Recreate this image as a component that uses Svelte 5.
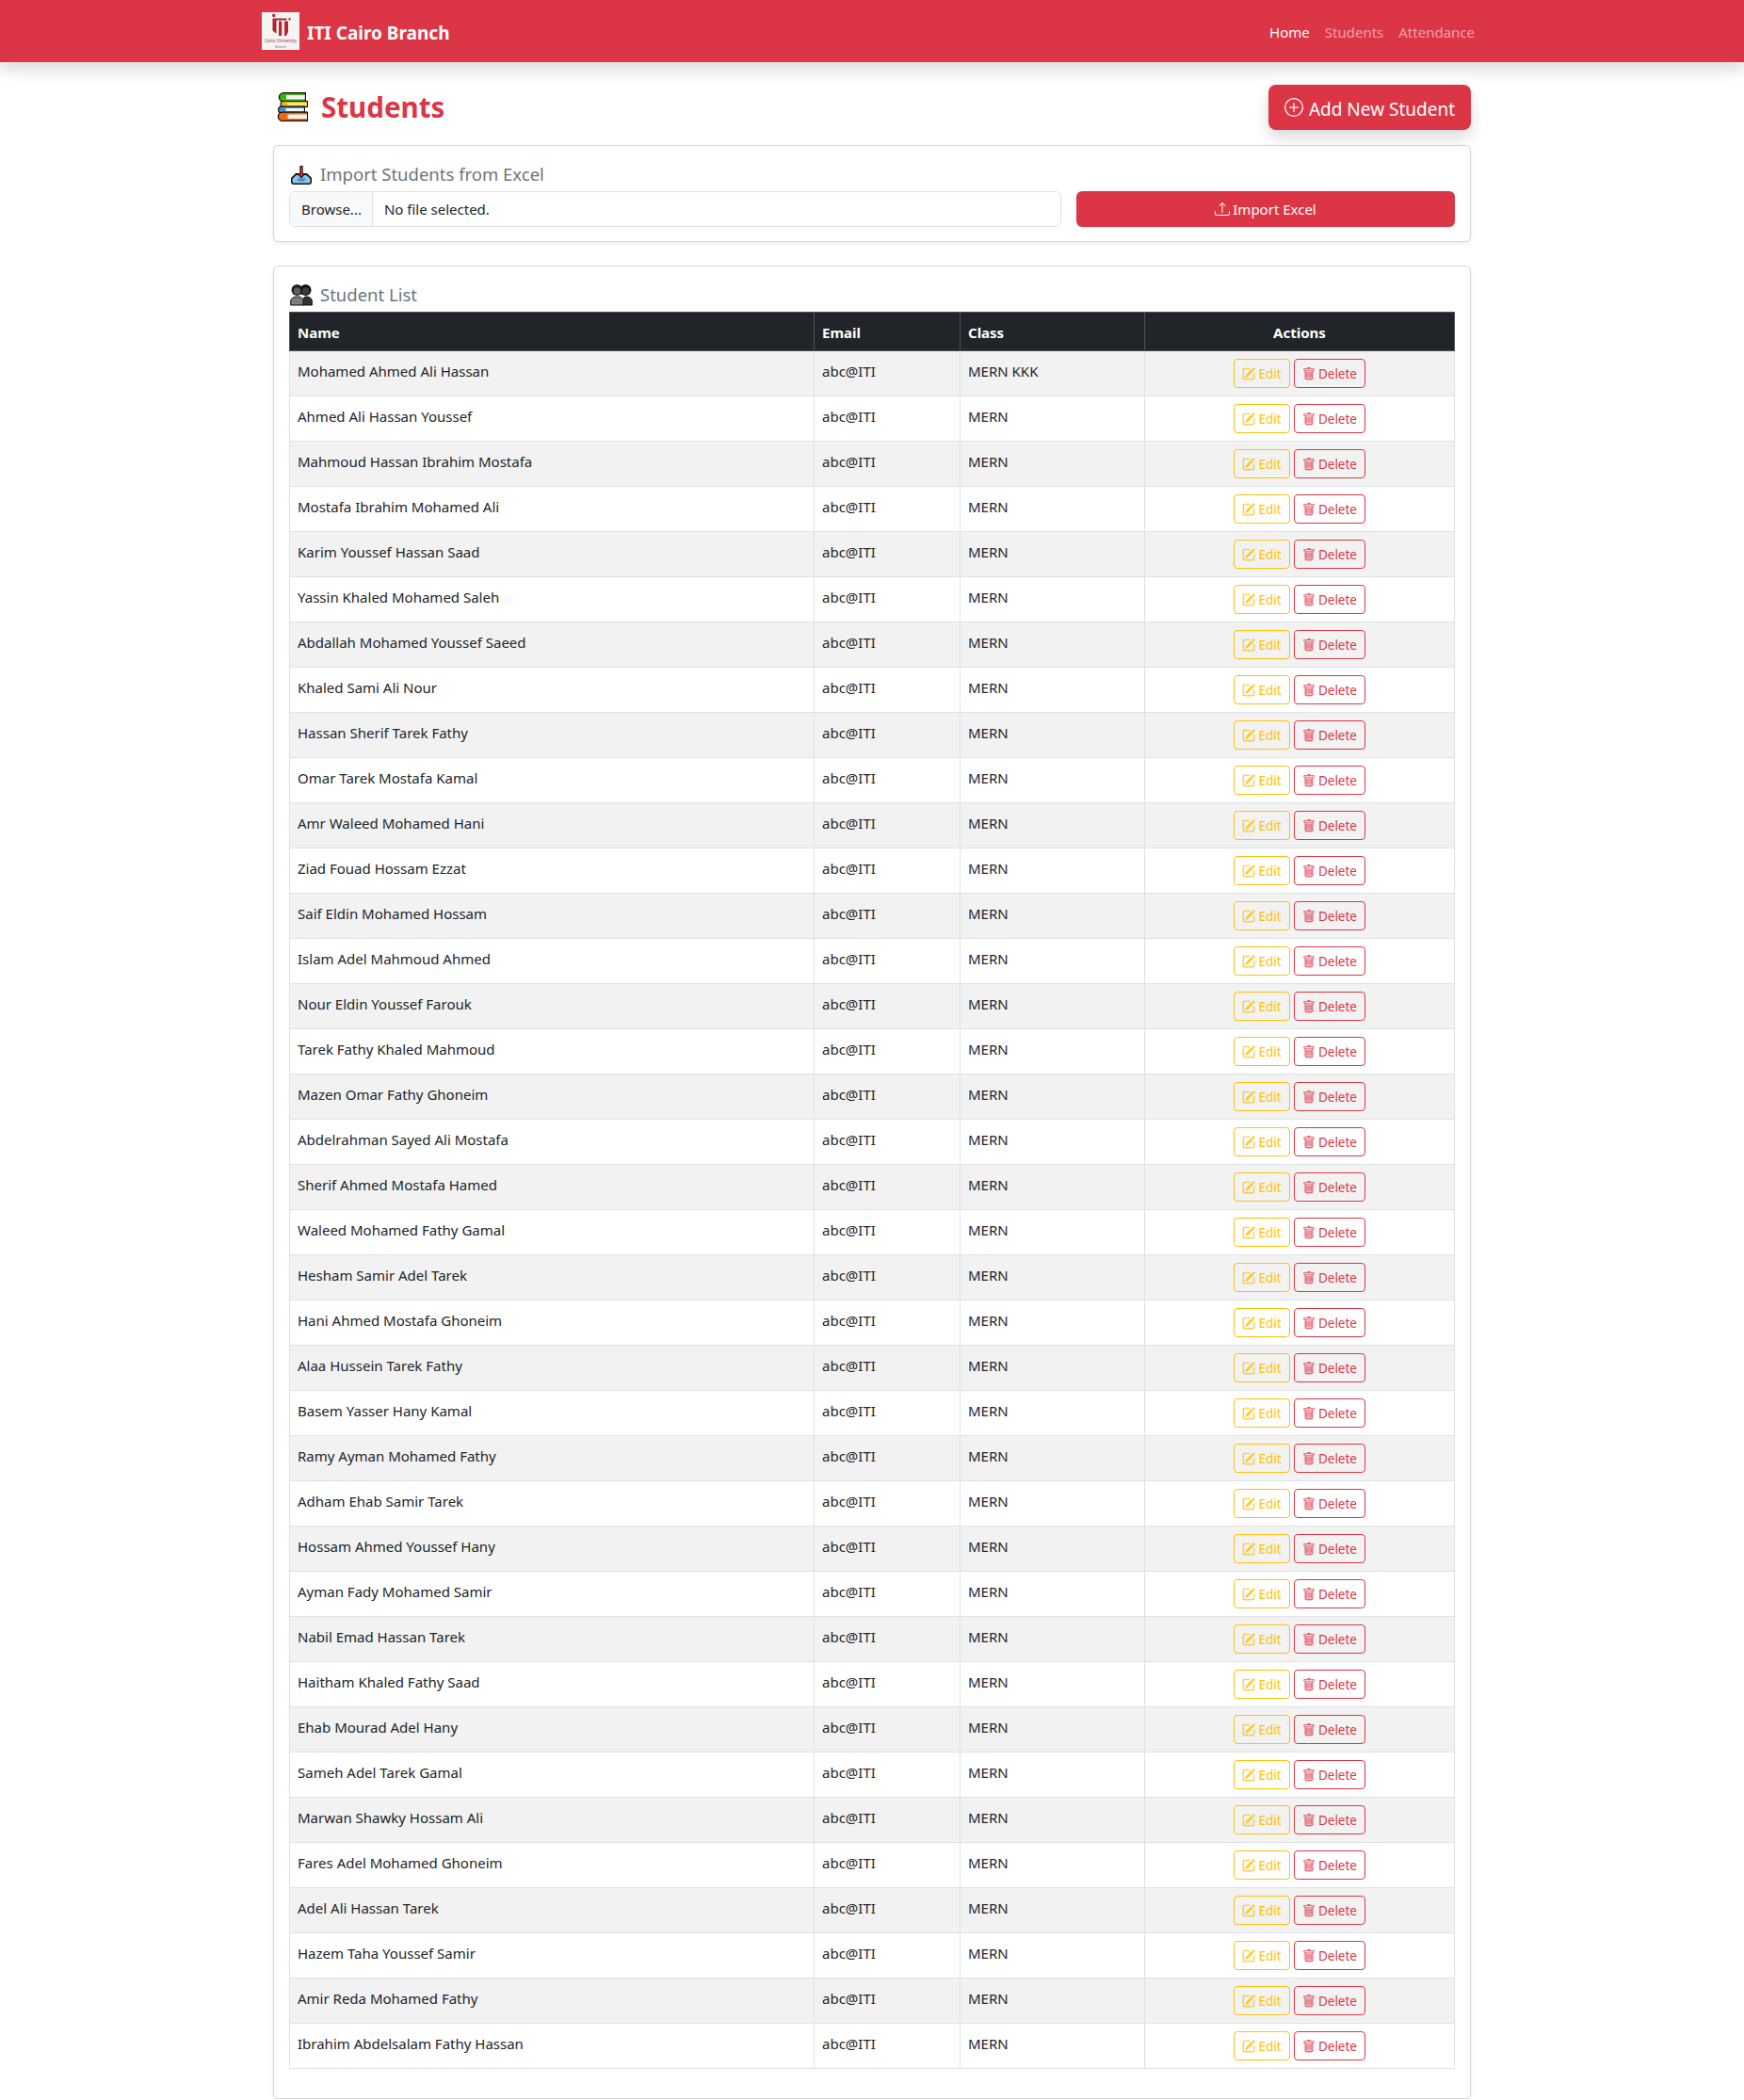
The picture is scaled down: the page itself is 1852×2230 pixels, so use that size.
<script>
  const names = [
    "Mohamed Ahmed Ali Hassan", "Ahmed Ali Hassan Youssef", "Mahmoud Hassan Ibrahim Mostafa",
    "Mostafa Ibrahim Mohamed Ali", "Karim Youssef Hassan Saad", "Yassin Khaled Mohamed Saleh",
    "Abdallah Mohamed Youssef Saeed", "Khaled Sami Ali Nour", "Hassan Sherif Tarek Fathy",
    "Omar Tarek Mostafa Kamal", "Amr Waleed Mohamed Hani", "Ziad Fouad Hossam Ezzat",
    "Saif Eldin Mohamed Hossam", "Islam Adel Mahmoud Ahmed", "Nour Eldin Youssef Farouk",
    "Tarek Fathy Khaled Mahmoud", "Mazen Omar Fathy Ghoneim", "Abdelrahman Sayed Ali Mostafa",
    "Sherif Ahmed Mostafa Hamed", "Waleed Mohamed Fathy Gamal", "Hesham Samir Adel Tarek",
    "Hani Ahmed Mostafa Ghoneim", "Alaa Hussein Tarek Fathy", "Basem Yasser Hany Kamal",
    "Ramy Ayman Mohamed Fathy", "Adham Ehab Samir Tarek", "Hossam Ahmed Youssef Hany",
    "Ayman Fady Mohamed Samir", "Nabil Emad Hassan Tarek", "Haitham Khaled Fathy Saad",
    "Ehab Mourad Adel Hany", "Sameh Adel Tarek Gamal", "Marwan Shawky Hossam Ali",
    "Fares Adel Mohamed Ghoneim", "Adel Ali Hassan Tarek", "Hazem Taha Youssef Samir",
    "Amir Reda Mohamed Fathy", "Ibrahim Abdelsalam Fathy Hassan"
  ];
  const students = names.map((name, i) => ({
    name,
    email: "abc@ITI",
    className: i === 0 ? "MERN KKK" : "MERN"
  }));
</script>

<nav class="navbar">
  <div class="nav-inner">
    <a class="brand" href="#home">
      <span class="logo">
        <svg viewBox="0 0 40 40" width="40" height="40">
          <rect width="40" height="40" fill="#f4f4f4" />
          <circle cx="12.700" cy="3.500" r="1.700" fill="#c3202c" />
          <path d="M11.500 6.500h15v2h-11V22h-1l-3-2.500z" fill="#a9232d" />
          <path d="M18 9.500h3.200V25H18zM24 9.500h4V21l-2 4h-2z" fill="#b5262f" />
          <path d="M28 6.800h3v.9h-3zM29 5.800h1v3h-1z" fill="#c3202c" />
          <text class="logo-line" x="20" y="32" font-size="4.600" fill="#b8323c">Cairo University</text>
          <text class="logo-line" x="20" y="37.500" font-size="3.400" fill="#7d6a6e">Branch</text>
        </svg>
      </span>
      <span class="brand-name">ITI Cairo Branch</span>
    </a>
    <div class="nav-links">
      <a class="active" href="#home">Home</a>
      <a href="#students">Students</a>
      <a href="#attendance">Attendance</a>
    </div>
  </div>
</nav>

<main class="page">
  <div class="page-head">
    <h2 class="page-title">
      <svg class="books" viewBox="0 0 33 31" width="33" height="31">
        <path d="M7 0h24v10.500H7a5 5 0 0 1 0-10.500z" fill="#111" />
        <path d="M7 1.200h22.800v8H7a4 4 0 0 1 0-8z" fill="#3fb30e" />
        <path d="M10 3h19.800v4.400H10z" fill="#f4f4f4" />
        <path d="M7 9h26v7H7a3.500 3.500 0 0 1 0-7z" fill="#111" />
        <path d="M7 10.100h25v4.800H7a2.400 2.400 0 0 1 0-4.800z" fill="#f5b514" />
        <path d="M11 11.500h20v2H11z" fill="#fdf3d0" />
        <path d="M5 14.500h25v8H5a4 4 0 0 1 0-8z" fill="#111" />
        <path d="M5 15.700h23.800v5.600H5a2.800 2.800 0 0 1 0-5.600z" fill="#3f8fd8" />
        <path d="M9.500 17h19.300v3H9.500z" fill="#f4f4f4" />
        <path d="M6 20.500h27V31H6a5.200 5.200 0 0 1 0-10.500z" fill="#111" />
        <path d="M6 21.800h26v8H6a4 4 0 0 1 0-8z" fill="#f0660f" />
        <path d="M12 23.500q-1.500 2.200 0 4.500h20v-4.500z" fill="#f6f6f6" />
      </svg>
      Students
    </h2>
    <button class="btn btn-add">
      <svg viewBox="0 0 16 16" width="20" height="20" fill="currentColor">
        <path d="M8 15A7 7 0 1 1 8 1a7 7 0 0 1 0 14zm0 1A8 8 0 1 0 8 0a8 8 0 0 0 0 16z" />
        <path d="M8 4a.5.5 0 0 1 .5.5v3h3a.5.5 0 0 1 0 1h-3v3a.5.5 0 0 1-1 0v-3h-3a.5.5 0 0 1 0-1h3v-3A.5.5 0 0 1 8 4z" />
      </svg>
      <span class="add-label">Add New Student</span>
    </button>
  </div>

  <section class="card import-card">
    <h5 class="card-title">
      <svg viewBox="0 0 24 24" width="24" height="24">
        <path d="M1 16l5-5h12l5 5v4a3 3 0 0 1-3 3H4a3 3 0 0 1-3-3z" fill="#111" />
        <path d="M2.500 17l4-4h11l4 4v3a1.500 1.500 0 0 1-1.500 1.500H4A1.500 1.500 0 0 1 2.500 20z" fill="#8cc6ee" />
        <path d="M7 16.500h10l-2 3H9z" fill="#3f8fd0" />
        <path d="M10.300 3h3.400v8h3.300l-5 5.500-5-5.500h3.300z" fill="#111" />
        <path d="M11.200 4h1.600v8h1.800L12 15 9.400 12h1.800z" fill="#e0262c" />
      </svg>
      Import Students from Excel
    </h5>
    <div class="import-row">
      <div class="file-input">
        <span class="file-btn">Browse...</span>
        <span class="file-name">No file selected.</span>
      </div>
      <button class="btn btn-import">
        <svg viewBox="0 0 16 16" width="16" height="16" fill="currentColor">
          <path d="M.5 9.900a.5.5 0 0 1 .5.500v2.500a1 1 0 0 0 1 1h12a1 1 0 0 0 1-1v-2.500a.5.5 0 0 1 1 0v2.500a2 2 0 0 1-2 2H2a2 2 0 0 1-2-2v-2.500a.5.5 0 0 1 .5-.5z" />
          <path d="M7.646 1.146a.5.5 0 0 1 .708 0l3 3a.5.5 0 0 1-.708.708L8.500 2.707V11.500a.5.5 0 0 1-1 0V2.707L5.354 4.854a.5.5 0 1 1-.708-.708l3-3z" />
        </svg>
        Import Excel
      </button>
    </div>
  </section>

  <section class="card list-card">
    <h5 class="card-title">
      <svg viewBox="0 0 24 24" width="24" height="24">
        <circle cx="7.500" cy="7" r="6" fill="#1c1c1c" />
        <circle cx="16.500" cy="7" r="6" fill="#111" />
        <circle cx="7.500" cy="8" r="3.800" fill="#5c5c5c" />
        <circle cx="16.500" cy="8" r="3.800" fill="#3c3c3c" />
        <path d="M.7 23v-4c0-3 3-5 7-5s7 2 7 5v4z" fill="#7c7c7c" stroke="#111" />
        <path d="M14 23v-4c0-3 .5-5 3-5 4 0 6.300 2 6.300 5v4z" fill="#333" stroke="#111" />
      </svg>
      Student List
    </h5>
    <table class="table">
      <colgroup>
        <col class="col-name" />
        <col class="col-email" />
        <col class="col-class" />
        <col />
      </colgroup>
      <thead>
        <tr>
          <th>Name</th>
          <th>Email</th>
          <th>Class</th>
          <th class="center">Actions</th>
        </tr>
      </thead>
      <tbody>
        {#each students as s}
          <tr>
            <td>{s.name}</td>
            <td>{s.email}</td>
            <td>{s.className}</td>
            <td class="center">
              <button class="btn-sm btn-edit">
                <svg viewBox="0 0 16 16" width="14" height="14" fill="currentColor" stroke="currentColor" stroke-width="0.4">
                  <path d="M15.502 1.940a.5.5 0 0 1 0 .706L14.459 3.690l-2-2L13.502.646a.5.5 0 0 1 .707 0l1.293 1.293zm-1.750 2.456-2-2L4.939 9.210a.5.5 0 0 0-.121.196l-.805 2.414a.25.25 0 0 0 .316.316l2.414-.805a.5.5 0 0 0 .196-.120l6.813-6.814z" />
                  <path fill-rule="evenodd" d="M1 13.500A1.500 1.500 0 0 0 2.500 15h11a1.500 1.500 0 0 0 1.500-1.500v-6a.5.5 0 0 0-1 0v6a.5.5 0 0 1-.5.5h-11a.5.5 0 0 1-.5-.5v-11a.5.5 0 0 1 .5-.5H9a.5.5 0 0 0 0-1H2.500A1.500 1.500 0 0 0 1 2.500v11z" />
                </svg>
                Edit
              </button>
              <button class="btn-sm btn-delete">
                <svg viewBox="0 0 16 16" width="14" height="14" fill="currentColor">
                  <path class="trash-body" d="M3 4h10v9a2 2 0 0 1-2 2H5a2 2 0 0 1-2-2z" />
                  <path d="M5.500 5.500A.5.5 0 0 1 6 6v6a.5.5 0 0 1-1 0V6a.5.5 0 0 1 .5-.5zm2.500 0a.5.5 0 0 1 .5.500v6a.5.5 0 0 1-1 0V6a.5.5 0 0 1 .5-.5zm3 .500a.5.5 0 0 0-1 0v6a.5.5 0 0 0 1 0V6z" />
                  <path fill-rule="evenodd" d="M14.500 3a1 1 0 0 1-1 1H13v9a2 2 0 0 1-2 2H5a2 2 0 0 1-2-2V4h-.5a1 1 0 0 1-1-1V2a1 1 0 0 1 1-1H6a1 1 0 0 1 1-1h2a1 1 0 0 1 1 1h3.500a1 1 0 0 1 1 1v1zM4.118 4 4 4.059V13a1 1 0 0 0 1 1h6a1 1 0 0 0 1-1V4.059L11.882 4H4.118zM2.500 3V2h11v1h-11z" />
                </svg>
                Delete
              </button>
            </td>
          </tr>
        {/each}
      </tbody>
    </table>
  </section>
</main>

<style>
  :global(body) {
    margin: 0;
    background: #fff;
    color: #212529;
    font-family: "Noto Sans", "Open Sans", sans-serif;
    font-size: 16px;
  }

  a {
    text-decoration: none;
  }

  /* navbar */
  .navbar {
    height: 66px;
    background: #dc3545;
    box-shadow: 0 8px 16px rgba(0, 0, 0, 0.15);
    display: flex;
    justify-content: center;
  }
  .nav-inner {
    width: 1296px;
    display: flex;
    align-items: center;
    justify-content: space-between;
  }
  .brand {
    display: flex;
    align-items: center;
    gap: 8px;
    color: #fff;
    font-weight: 700;
    font-size: 19px;
  }
  .brand-name {
    padding-top: 3px;
  }
  .logo {
    display: flex;
  }
  .logo-line {
    font-family: "Noto Sans", sans-serif;
    font-weight: 400;
    text-anchor: middle;
  }
  .nav-links {
    display: flex;
    padding-top: 2px;
  }
  .nav-links a {
    padding: 8px;
    color: rgba(255, 255, 255, 0.55);
    font-size: 15px;
  }
  .nav-links a.active {
    color: #fff;
  }

  /* page */
  .page {
    width: 1272px;
    margin: 0 auto;
  }
  .page-head {
    height: 88px;
    box-sizing: border-box;
    padding-top: 8px;
    display: flex;
    align-items: center;
    justify-content: space-between;
  }
  .page-title {
    margin: 0 0 2px;
    display: flex;
    align-items: center;
    gap: 14px;
    color: #dc3545;
    font-size: 29.500px;
    font-weight: 700;
  }
  .books {
    margin-left: 4px;
  }

  .btn {
    border: 0;
    background: #dc3545;
    color: #fff;
    font-family: inherit;
    display: inline-flex;
    align-items: center;
    justify-content: center;
  }
  .btn-add {
    height: 48px;
    width: 215px;
    gap: 6px;
    border-radius: 8px;
    font-size: 19px;
    box-shadow: 0 8px 16px rgba(0, 0, 0, 0.15);
  }
  .add-label {
    padding-top: 3px;
  }

  /* cards */
  .card {
    border: 1px solid #d5d5d5;
    border-radius: 6px;
    padding: 16px;
    box-sizing: border-box;
    box-shadow: 0 2px 4px rgba(0, 0, 0, 0.075);
  }
  .import-card {
    height: 103px;
  }
  .list-card {
    margin-top: 25px;
    height: 1947px;
  }
  .card-title {
    margin: 0;
    height: 32px;
    box-sizing: border-box;
    padding-bottom: 5px;
    display: flex;
    align-items: center;
    gap: 8px;
    color: #6c757d;
    font-size: 18.500px;
    font-weight: 400;
  }
  .card-title svg {
    margin-left: 1px;
  }

  .import-row {
    display: flex;
    gap: 16px;
  }
  .file-input {
    flex: 1;
    height: 38px;
    box-sizing: border-box;
    border: 1px solid #dee2e6;
    border-radius: 6px;
    display: flex;
    overflow: hidden;
    font-size: 15px;
    line-height: 36px;
  }
  .file-btn {
    padding: 0 11px 0 12px;
    background: #f8f9fa;
    border-right: 1px solid #dee2e6;
  }
  .file-name {
    padding: 0 12px;
  }
  .btn-import {
    width: 402px;
    height: 38px;
    gap: 3px;
    border-radius: 6px;
    font-size: 15px;
  }

  /* table */
  .table {
    width: 100%;
    border-collapse: collapse;
    table-layout: fixed;
    font-size: 15px;
  }
  .col-name {
    width: 557px;
  }
  .col-email {
    width: 155px;
  }
  .col-class {
    width: 196px;
  }
  th {
    background: #212529;
    color: #fff;
    border: 1px solid #4d5154;
    padding: 9px 8px 7px;
    height: 41px;
    box-sizing: border-box;
    text-align: left;
    font-weight: 700;
    line-height: 24px;
  }
  td {
    border: 1px solid #dee2e6;
    padding: 8px;
    height: 48px;
    box-sizing: border-box;
    vertical-align: top;
    line-height: 24px;
  }
  td:not(.center) {
    padding-top: 9px;
    padding-bottom: 7px;
  }
  tbody tr:nth-child(odd) td {
    background: #f2f2f2;
  }
  th.center,
  td.center {
    text-align: center;
  }

  .btn-sm {
    height: 31px;
    padding: 0;
    border-radius: 4px;
    background: transparent;
    border: 1px solid;
    font-family: inherit;
    font-size: 13.500px;
    vertical-align: top;
    display: inline-flex;
    align-items: center;
    justify-content: center;
    gap: 3px;
    white-space: nowrap;
  }
  .btn-edit {
    width: 60px;
    color: #ffc107;
  }
  .btn-delete {
    width: 76px;
    color: #dc3545;
  }
  .btn-sm svg {
    opacity: 0.85;
  }
  .trash-body {
    opacity: 0.35;
  }
</style>
